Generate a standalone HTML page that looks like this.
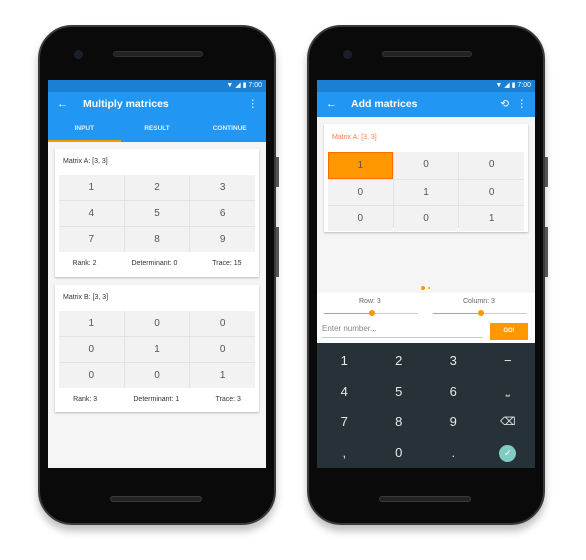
<!DOCTYPE html>
<html><head><style>
*{margin:0;padding:0;box-sizing:border-box}
body{width:586px;height:560px;background:#fff;position:relative;overflow:hidden;font-family:"Liberation Sans",sans-serif}
.phone{position:absolute;top:25px;width:238px;height:500px;background:#0a0a0a;border-radius:34px;box-shadow:0 6px 8px rgba(0,0,0,.25);border:2px solid #3a3a3a}
.cam{position:absolute;left:34px;top:23px;width:9px;height:9px;border-radius:50%;background:#1a1f2a}
.spk{position:absolute;left:73px;top:24px;width:90px;height:6px;border-radius:3px;background:#222;border:1px solid #333}
.bspk{position:absolute;left:70px;top:469px;width:92px;height:6px;border-radius:3px;background:#222;border:1px solid #3a3a3a}
.btn{position:absolute;right:-5px;width:3px;background:#555}
.screen{position:absolute;left:8px;top:53px;width:218px;height:388px;background:#f5f5f5;overflow:hidden}
.sb{height:12px;background:#1b7fd4;color:#fff;font-size:7px;text-align:right;padding-right:4px;line-height:12px}
.ab{height:25px;background:#2196f3;color:#fff;position:relative;font-size:10.5px;line-height:25px}
.ab .back{position:absolute;left:9px;font-size:11px}
.ab .t{position:absolute;left:35px;font-weight:bold}
.tabs{height:25px;background:#2196f3;color:#e3f0fd;font-size:6.5px;font-weight:bold;display:flex;position:relative}
.tabs div{flex:1;text-align:center;line-height:24px}
.card{position:absolute;background:#fff;box-shadow:0 1px 2px rgba(0,0,0,.25)}
.grid{position:absolute;display:grid;grid-template-columns:repeat(3,1fr);background:#e2e2e2;gap:1px}
.grid div{background:#f2f2f2;text-align:center;color:#555;font-size:10px}
.lbl{position:absolute;font-size:7px;color:#333}
.stats{position:absolute;display:flex;font-size:7px;color:#333;justify-content:space-around}
.kb{position:absolute;left:0;top:263px;width:218px;height:125px;padding-top:3px;background:#263238;display:grid;grid-template-columns:repeat(4,1fr);grid-template-rows:repeat(4,30.5px);color:#e8eaeb;font-size:13px;text-align:center}
.kb div{line-height:30px}
</style></head><body>

<div class="phone" style="left:38px">
<div class="cam"></div><div class="spk"></div><div class="bspk"></div>
<div class="btn" style="top:130px;height:30px"></div><div class="btn" style="top:200px;height:50px"></div>
<div class="screen">
<div class="sb">▼ ◢ ▮ 7:00</div>
<div class="ab"><span class="back">←</span><span class="t">Multiply matrices</span><span style="position:absolute;right:8px">⋮</span></div>
<div class="tabs"><div>INPUT</div><div>RESULT</div><div>CONTINUE</div>
<span style="position:absolute;left:0;bottom:0;width:73px;height:2px;background:#ff9800"></span></div>
<div class="card" style="left:7px;top:69px;width:204px;height:128px">
<div class="lbl" style="left:8px;top:9px">Matrix A: [3, 3]</div>
<div class="grid" style="left:4px;top:26px;width:196px;height:77px;grid-template-rows:repeat(3,1fr)">
<div style="line-height:25px">1</div><div style="line-height:25px">2</div><div style="line-height:25px">3</div>
<div style="line-height:25px">4</div><div style="line-height:25px">5</div><div style="line-height:25px">6</div>
<div style="line-height:25px">7</div><div style="line-height:25px">8</div><div style="line-height:25px">9</div></div>
<div class="stats" style="left:0;top:111px;width:204px"><span>Rank: 2</span><span>Determinant: 0</span><span>Trace: 15</span></div>
</div>
<div class="card" style="left:7px;top:205px;width:204px;height:127px">
<div class="lbl" style="left:8px;top:9px">Matrix B: [3, 3]</div>
<div class="grid" style="left:4px;top:26px;width:196px;height:77px;grid-template-rows:repeat(3,1fr)">
<div style="line-height:25px">1</div><div style="line-height:25px">0</div><div style="line-height:25px">0</div>
<div style="line-height:25px">0</div><div style="line-height:25px">1</div><div style="line-height:25px">0</div>
<div style="line-height:25px">0</div><div style="line-height:25px">0</div><div style="line-height:25px">1</div></div>
<div class="stats" style="left:0;top:111px;width:204px"><span>Rank: 3</span><span>Determinant: 1</span><span>Trace: 3</span></div>
</div>
</div></div>

<div class="phone" style="left:307px">
<div class="cam"></div><div class="spk"></div><div class="bspk"></div>
<div class="btn" style="top:130px;height:30px"></div><div class="btn" style="top:200px;height:50px"></div>
<div class="screen" style="left:8px">
<div class="sb">▼ ◢ ▮ 7:00</div>
<div class="ab"><span class="back">←</span><span class="t" style="left:34px">Add matrices</span><span style="position:absolute;right:26px">⟲</span><span style="position:absolute;right:8px">⋮</span></div>
<div class="card" style="left:7px;top:44px;width:204px;height:108px">
<div class="lbl" style="left:8px;top:10px;color:#ff7f3f">Matrix A: [3, 3]</div>
<div class="grid" style="left:4px;top:28px;width:196px;height:76px;grid-template-rows:repeat(3,1fr)">
<div style="line-height:25px;background:#ff9800;border:1px solid #ff6d00">1</div><div style="line-height:25px">0</div><div style="line-height:25px">0</div>
<div style="line-height:25px">0</div><div style="line-height:25px">1</div><div style="line-height:25px">0</div>
<div style="line-height:25px">0</div><div style="line-height:25px">0</div><div style="line-height:25px">1</div></div>
</div>
<div style="position:absolute;left:104px;top:206px;width:4px;height:4px;border-radius:50%;background:#ff9800"></div>
<div style="position:absolute;left:111px;top:207px;width:2px;height:2px;border-radius:50%;background:#ff9800"></div>
<div style="position:absolute;left:0;top:213px;width:218px;height:50px;background:#fff">
<div class="lbl" style="left:42px;top:5px;color:#666">Row: 3</div>
<div class="lbl" style="left:146px;top:5px;color:#666">Column: 3</div>
<div style="position:absolute;left:7px;top:20px;width:94px;height:1px;background:#ccc"></div>
<div style="position:absolute;left:7px;top:20px;width:47px;height:1px;background:#ff9800"></div>
<div style="position:absolute;left:52px;top:17px;width:6px;height:6px;border-radius:50%;background:#ff9800"></div>
<div style="position:absolute;left:116px;top:20px;width:94px;height:1px;background:#ccc"></div>
<div style="position:absolute;left:116px;top:20px;width:47px;height:1px;background:#ff9800"></div>
<div style="position:absolute;left:161px;top:17px;width:6px;height:6px;border-radius:50%;background:#ff9800"></div>
<div style="position:absolute;left:5px;top:31px;font-size:8px;color:#888">Enter number...</div>
<div style="position:absolute;left:5px;top:44px;width:161px;height:1px;background:#ffb98a"></div>
<div style="position:absolute;left:173px;top:30px;width:38px;height:17px;background:#ff9800;color:#fff;font-size:6px;font-weight:bold;text-align:center;line-height:17px">GO!</div>
</div>
<div class="kb">
<div>1</div><div>2</div><div>3</div><div>−</div>
<div>4</div><div>5</div><div>6</div><div style="font-size:10px">⎵</div>
<div>7</div><div>8</div><div>9</div><div style="font-size:11px">⌫</div>
<div>,</div><div>0</div><div>.</div><div><span style="display:inline-block;width:17px;height:17px;border-radius:50%;background:#80cbc4;color:#fff;font-size:9px;line-height:17px;vertical-align:middle">✓</span></div>
</div>
</div></div>
</body></html>
